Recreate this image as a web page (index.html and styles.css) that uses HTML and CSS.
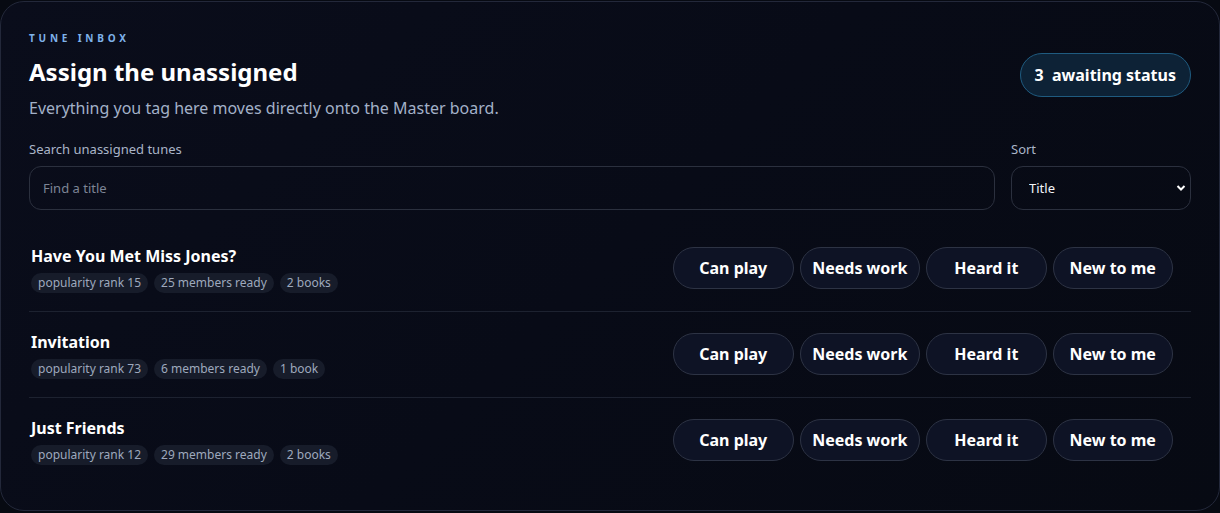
FILE: index.html
```html
<!DOCTYPE html>
<html lang="en">
<head>
<meta charset="utf-8">
<title>Tune inbox</title>
<link rel="stylesheet" href="styles.css">
</head>
<body>
<section class="card">
  <header class="head">
    <div class="head-text">
      <div class="eyebrow">TUNE INBOX</div>
      <h1 class="title">Assign the unassigned</h1>
      <p class="sub">Everything you tag here moves directly onto the Master board.</p>
    </div>
    <div class="badge">3&nbsp; awaiting status</div>
  </header>

  <div class="filters">
    <label class="field grow">
      <span class="label">Search unassigned tunes</span>
      <input class="input" type="text" placeholder="Find a title">
    </label>
    <label class="field sort">
      <span class="label">Sort</span>
      <select class="select">
        <option>Title</option>
      </select>
    </label>
  </div>

  <ul class="list">
    <li class="row">
      <div class="info">
        <div class="name">Have You Met Miss Jones?</div>
        <div class="chips"><span class="chip">popularity rank 15</span><span class="chip">25 members ready</span><span class="chip">2 books</span></div>
      </div>
      <div class="actions"><button class="btn">Can play</button><button class="btn">Needs work</button><button class="btn">Heard it</button><button class="btn">New to me</button></div>
    </li>
    <li class="row">
      <div class="info">
        <div class="name">Invitation</div>
        <div class="chips"><span class="chip">popularity rank 73</span><span class="chip">6 members ready</span><span class="chip">1 book</span></div>
      </div>
      <div class="actions"><button class="btn">Can play</button><button class="btn">Needs work</button><button class="btn">Heard it</button><button class="btn">New to me</button></div>
    </li>
    <li class="row">
      <div class="info">
        <div class="name">Just Friends</div>
        <div class="chips"><span class="chip">popularity rank 12</span><span class="chip">29 members ready</span><span class="chip">2 books</span></div>
      </div>
      <div class="actions"><button class="btn">Can play</button><button class="btn">Needs work</button><button class="btn">Heard it</button><button class="btn">New to me</button></div>
    </li>
  </ul>
</section>
</body>
</html>
```

FILE: styles.css
```css
* { box-sizing: border-box; }
html, body { margin: 0; height: 100%; }
body {
  background: #070a12;
  font-family: "Noto Sans", "Open Sans", sans-serif;
  color: #f2f4f8;
  padding: 1px 0 2px 0;
}
.card {
  height: 510px;
  border: 1px solid #23283a;
  border-radius: 24px;
  background: linear-gradient(135deg, #0a0d1b 0%, #080b17 50%, #070a13 100%);
  padding: 28px 28px 0 28px;
}
.head {
  display: flex;
  justify-content: space-between;
  align-items: flex-start;
}
.eyebrow {
  font-size: 10px;
  font-weight: 700;
  letter-spacing: 3.8px;
  color: #7fb2ea;
  line-height: 14px;
  margin-top: 1px;
}
.title {
  margin: 11px 0 0;
  font-size: 24px;
  font-weight: 700;
  line-height: 32px;
  color: #ffffff;
}
.sub {
  margin: 8px 0 0;
  font-size: 16px;
  line-height: 24px;
  color: #a3b1c8;
}
.badge {
  margin-top: 23px;
  height: 44px;
  padding: 0 14px;
  display: flex;
  align-items: center;
  border-radius: 22px;
  background: #0d2236;
  border: 1px solid #1f5b80;
  font-size: 16px;
  font-weight: 700;
  color: #ffffff;
}
.filters {
  display: flex;
  gap: 16px;
  margin-top: 21px;
}
.field { display: flex; flex-direction: column; gap: 8px; }
.grow { flex: 1; }
.sort { width: 180px; }
.label {
  font-size: 13px;
  line-height: 17px;
  color: #aab5c8;
}
.input, .select {
  height: 44px;
  border: 1px solid #2b303e;
  border-radius: 12px;
  background: transparent;
  font-family: inherit;
  font-size: 13px;
  color: #f2f4f8;
  outline: none;
}
.input { padding: 0 13px; }
.input::placeholder { color: #7d8596; }
.select {
  appearance: none;
  -webkit-appearance: none;
  padding: 0 17px;
  background-image: url("data:image/svg+xml,%3Csvg xmlns='http://www.w3.org/2000/svg' width='10' height='8' viewBox='0 0 10 8'%3E%3Cpath d='M1.5 2l3.5 3.5L8.5 2' fill='none' stroke='%23ffffff' stroke-width='2'/%3E%3C/svg%3E");
  background-repeat: no-repeat;
  background-position: right 4px center;
}
.list { list-style: none; margin: 16px 0 0; padding: 0; }
.row {
  display: flex;
  align-items: center;
  justify-content: space-between;
  padding: 19px 18px 18px 2px;
  border-bottom: 1px solid #1d2230;
}
.row:last-child { border-bottom: none; }
.info { display: flex; flex-direction: column; gap: 6px; }
.name {
  font-size: 16px;
  font-weight: 700;
  line-height: 22px;
  color: #ffffff;
}
.chips { display: flex; gap: 6px; }
.chip {
  height: 20px;
  line-height: 20px;
  padding: 0 7px;
  border-radius: 10px;
  background: #171c2a;
  font-size: 12px;
  color: #9ea9bd;
}
.actions { display: flex; gap: 6px; margin-top: -2px; }
.btn {
  width: 120.5px;
  height: 42px;
  border-radius: 21px;
  border: 1px solid #2d3344;
  background: #0e1325;
  color: #ffffff;
  font-family: inherit;
  font-size: 16px;
  font-weight: 700;
  padding: 0;
}
```
